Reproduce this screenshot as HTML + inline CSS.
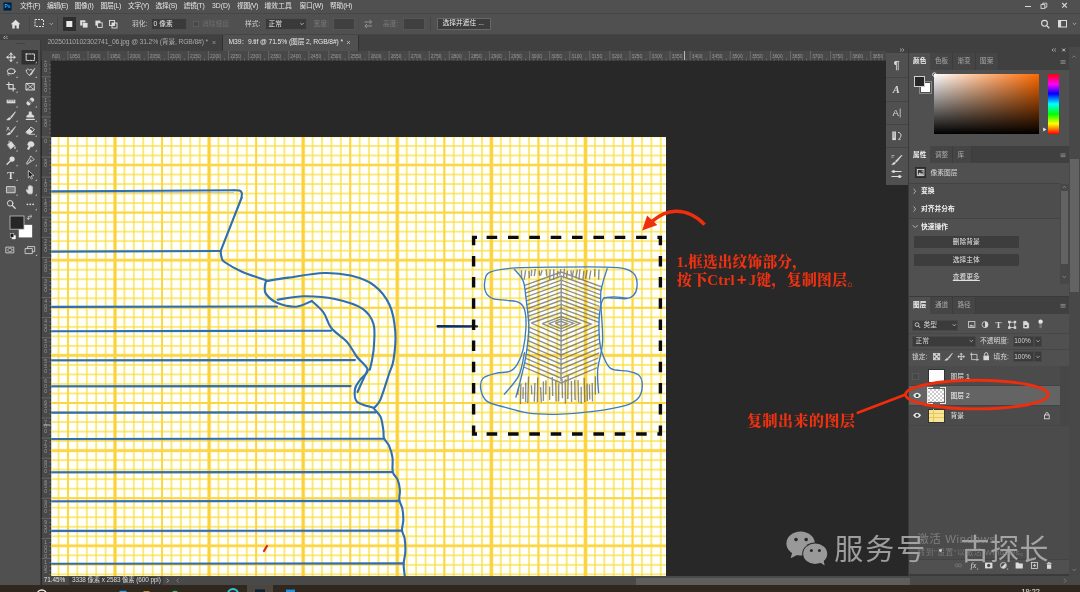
<!DOCTYPE html>
<html>
<head>
<meta charset="utf-8">
<title>Photoshop</title>
<style>
*{box-sizing:border-box;margin:0;padding:0}
html,body{width:1080px;height:592px;overflow:hidden;background:#282828}
body{position:relative;font-family:"Liberation Sans","Noto Sans CJK SC",sans-serif;color:#d6d6d6;font-size:6.75px;line-height:1}
.a{position:absolute}
.t{position:absolute;white-space:nowrap;line-height:1;opacity:.999}
svg{position:absolute;left:0;top:0;overflow:visible;opacity:.999}
.red{font-family:"Liberation Serif","Noto Serif CJK SC",serif;font-weight:900;color:#ee3110}
</style>
</head>
<body>
<svg width="1080" height="592" viewBox="0 0 1080 592">
<defs>
<clipPath id="pc"><rect x="51.2" y="137" width="614.8" height="439"/></clipPath>
<pattern id="gmin" x="20.900" y="69.800" width="9.4100" height="9.5200" patternUnits="userSpaceOnUse"><rect x="-0.650" y="0" width="1.300" height="9.5200" fill="#f8dc38" opacity="0.95"/><rect x="8.760" y="0" width="1.300" height="9.5200" fill="#f8dc38" opacity="0.95"/><rect x="0" y="-0.650" width="9.4100" height="1.300" fill="#f8dc38" opacity="0.95"/><rect x="0" y="8.870" width="9.4100" height="1.300" fill="#f8dc38" opacity="0.95"/></pattern>
<pattern id="gmed" x="20.900" y="69.800" width="47.0500" height="47.6000" patternUnits="userSpaceOnUse"><rect x="-0.950" y="0" width="1.900" height="47.6000" fill="#fbd644" opacity="1"/><rect x="46.100" y="0" width="1.900" height="47.6000" fill="#fbd644" opacity="1"/><rect x="0" y="-0.950" width="47.0500" height="1.900" fill="#fbd644" opacity="1"/><rect x="0" y="46.650" width="47.0500" height="1.900" fill="#fbd644" opacity="1"/></pattern>
<pattern id="gmaj" x="20.900" y="69.800" width="94.1000" height="95.2000" patternUnits="userSpaceOnUse"><rect x="-1.600" y="0" width="3.200" height="95.2000" fill="#fbd23a" opacity="1"/><rect x="92.500" y="0" width="3.200" height="95.2000" fill="#fbd23a" opacity="1"/><rect x="0" y="-1.300" width="94.1000" height="2.600" fill="#fbd648" opacity="1"/><rect x="0" y="93.900" width="94.1000" height="2.600" fill="#fbd648" opacity="1"/></pattern>
<filter id="soft" x="-5%" y="-5%" width="110%" height="110%"><feGaussianBlur stdDeviation="0.78"/></filter>
<filter id="soft2" x="-5%" y="-5%" width="110%" height="110%"><feGaussianBlur stdDeviation="0.55"/></filter>
<filter id="soft3" x="-5%" y="-5%" width="110%" height="110%"><feGaussianBlur stdDeviation="0.35"/></filter>
</defs>
<rect x="51.2" y="137" width="614.8" height="439" fill="#fffffb"/>
<g clip-path="url(#pc)">
<g filter="url(#soft)">
<rect x="49.2" y="135" width="618.8" height="443" fill="url(#gmin)"/>
<rect x="49.2" y="135" width="618.8" height="443" fill="url(#gmed)"/>
</g>
<g filter="url(#soft2)">
<rect x="49.2" y="135" width="618.8" height="443" fill="url(#gmaj)"/>
</g>
<g fill="none" stroke="#2f6fb0" stroke-width="2.1" stroke-linecap="round" stroke-linejoin="round">
<path d="M51.0 191.4L120.0 191.0L234.0 190.2"/>
<path d="M234.0 190.2C234.9 190.3 238.2 190.1 239.5 190.6C240.8 191.1 241.5 191.8 241.8 193.0C242.1 194.2 241.6 197.2 241.5 198.0"/>
<path d="M241.5 198.0L220.6 251.2"/>
<path d="M51.0 251.6L220.6 251.0"/>
<path d="M220.6 251.2C220.8 252.2 220.8 255.2 221.5 257.0C222.2 258.8 221.1 259.6 224.5 262.0C227.9 264.4 234.9 268.6 242.0 271.7C249.1 274.8 263.0 279.2 267.2 280.7"/>
<path d="M267.0 281.0C270.6 280.4 279.1 278.9 288.5 277.6C297.9 276.3 313.1 273.3 323.5 273.0C333.9 272.7 342.3 273.6 350.7 275.6C359.1 277.7 367.5 280.4 374.0 285.3C380.5 290.2 385.9 297.0 389.5 304.8C393.1 312.6 394.6 322.8 395.3 332.0C396.0 341.2 394.6 353.0 393.5 360.0C392.4 367.0 391.2 367.4 389.0 374.0C386.8 380.6 382.9 393.9 380.4 399.6C377.9 405.3 375.1 406.6 374.0 408.0"/>
<path d="M266.0 281.0C265.8 282.0 264.8 284.8 264.8 287.0C264.8 289.2 264.0 291.4 266.0 294.0C268.0 296.6 272.0 300.7 277.0 302.8C282.0 304.9 290.2 307.0 296.0 306.7C301.8 306.4 309.2 301.9 311.8 301.0"/>
<path d="M277.7 299.7C282.1 299.1 294.4 296.3 304.0 296.2C313.6 296.1 325.3 296.9 335.0 299.0C344.7 301.1 355.9 304.4 362.3 308.6C368.7 312.8 371.6 317.9 373.5 324.0C375.4 330.1 374.2 339.0 374.0 345.0C373.8 351.0 372.7 355.9 372.0 360.0C371.3 364.1 370.2 368.2 369.8 369.8"/>
<path d="M311.8 301.0C313.8 302.9 320.2 308.0 323.5 312.5C326.8 317.0 327.4 323.1 331.3 328.0C335.2 332.9 342.5 336.9 346.8 341.7C351.1 346.5 353.5 352.3 357.0 357.0C360.5 361.7 367.2 366.0 367.7 369.8C368.2 373.6 362.1 376.8 360.0 380.0C357.9 383.2 355.5 385.4 355.0 389.0C354.5 392.6 353.8 398.5 357.0 401.7C360.2 404.9 371.2 406.9 374.0 408.0"/>
<path d="M367.7 369.8C366.8 371.8 363.7 378.3 362.0 382.0C360.3 385.7 358.2 390.3 357.5 392.0"/>
<path d="M51.0 306.9L277.0 306.5"/>
<path d="M51.0 331.2L331.0 330.8"/>
<path d="M51.0 360.3L355.0 360.0"/>
<path d="M51.0 386.3L350.6 386.0"/>
<path d="M51.0 412.6L376.0 412.3"/>
<path d="M51.0 439.0L384.0 438.7"/>
<path d="M51.0 472.3L392.8 472.0"/>
<path d="M51.0 501.2L399.3 500.9"/>
<path d="M51.0 530.9L402.0 530.6"/>
<path d="M51.0 563.7L403.6 563.4"/>
<path d="M373.9 408.7C375.0 410.1 379.1 413.5 380.7 417.2C382.3 420.9 382.8 427.2 383.4 430.7C383.9 434.2 383.1 435.6 384.0 438.1C384.9 440.6 387.7 442.6 389.1 445.9C390.5 449.2 391.9 453.4 392.5 457.7C393.1 462.0 391.9 468.2 392.8 471.9C393.7 475.6 396.4 476.7 397.6 479.7C398.8 482.7 399.6 486.4 399.9 489.8C400.2 493.2 398.9 496.8 399.3 499.9C399.7 503.0 401.6 505.0 402.3 508.4C403.0 511.8 403.4 516.6 403.3 520.2C403.2 523.9 401.8 527.2 402.0 530.3C402.2 533.4 404.1 535.1 404.7 538.8C405.2 542.5 405.5 548.1 405.3 552.3C405.1 556.5 403.7 559.8 403.6 564.1C403.6 568.4 404.8 575.7 405.0 578.0"/>
</g>
<g fill="none" stroke="#6b7280" stroke-width="1" opacity=".35">
<path d="M51 192.6L234.0 192.6"/>
<path d="M51 361.2L355.0 361.2"/>
<path d="M51 387.2L350.6 387.2"/>
<path d="M51 413.5L376.0 413.5"/>
<path d="M51 439.9L384.7 439.9"/>
<path d="M51 473.2L393.0 473.2"/>
<path d="M51 502.1L399.6 502.1"/>
<path d="M51 531.8L403.8 531.8"/>
<path d="M51 564.6L405.0 564.6"/>
</g>
<path d="M264 551L267 546" stroke="#d8242a" stroke-width="2.2" stroke-linecap="round"/>
<path d="M437.6 326.2L477 326.4" stroke="#1d2a44" stroke-width="2.2" stroke-linecap="round"/>
<path d="M437.6 327.6L470 327.4" stroke="#3a78b8" stroke-width="1" stroke-linecap="round"/>
<clipPath id="oc"><path d="M514.5 268.0C528.4 265.8 591.8 265.5 606.5 268.0C621.2 270.5 603.5 277.8 602.5 283.0C601.5 288.2 600.8 292.8 600.2 299.0C599.6 305.2 599.0 312.3 599.0 320.0C599.0 327.7 600.3 336.7 600.0 345.0C599.7 353.3 597.3 360.2 597.0 370.0C596.7 379.8 611.3 398.3 598.0 404.0C584.7 409.7 529.8 407.7 517.0 404.0C504.2 400.3 519.5 390.2 521.0 382.0C522.5 373.8 524.8 364.2 526.0 355.0C527.2 345.8 528.0 336.5 528.0 327.0C528.0 317.5 526.8 305.7 526.0 298.0C525.2 290.3 524.9 286.0 523.0 281.0C521.1 276.0 500.6 270.2 514.5 268.0Z"/></clipPath>
<g clip-path="url(#oc)" fill="none" stroke="#50545c" stroke-width="1.35" opacity=".66" filter="url(#soft3)">
<path d="M521.5 270.2L521.6 278.7"/>
<path d="M525.6 270.4L524.1 279.6"/>
<path d="M529.0 270.9L529.3 278.2"/>
<path d="M531.7 269.8L531.3 276.2"/>
<path d="M535.3 268.8L534.3 276.1"/>
<path d="M539.3 270.5L539.5 275.8"/>
<path d="M542.1 270.2L540.5 275.6"/>
<path d="M546.1 269.3L546.7 276.1"/>
<path d="M550.1 269.4L549.7 279.8"/>
<path d="M553.8 269.3L553.7 279.7"/>
<path d="M558.0 270.8L557.2 276.5"/>
<path d="M560.8 269.1L559.9 275.3"/>
<path d="M564.4 268.8L563.5 278.4"/>
<path d="M567.5 270.6L566.6 277.4"/>
<path d="M570.9 270.4L571.4 275.3"/>
<path d="M573.5 270.4L571.9 279.2"/>
<path d="M577.4 269.6L575.8 277.9"/>
<path d="M580.0 269.2L578.9 279.8"/>
<path d="M583.8 270.8L583.0 279.7"/>
<path d="M587.0 270.0L585.6 278.9"/>
<path d="M590.8 270.6L589.3 279.3"/>
<path d="M594.9 269.0L594.7 276.7"/>
<path d="M599.0 269.5L598.6 279.6"/>
<path d="M518.5 379.5L517.8 395.0"/>
<path d="M520.9 383.6L520.4 404.0"/>
<path d="M523.2 386.9L523.0 398.9"/>
<path d="M525.7 382.5L525.6 402.1"/>
<path d="M528.5 376.6L527.8 403.1"/>
<path d="M531.4 385.2L531.8 394.4"/>
<path d="M534.9 382.9L534.3 401.7"/>
<path d="M537.7 377.6L537.4 402.3"/>
<path d="M540.6 387.0L541.3 402.4"/>
<path d="M543.4 381.4L543.4 401.0"/>
<path d="M546.0 380.4L545.8 394.6"/>
<path d="M549.6 386.6L549.6 399.9"/>
<path d="M552.3 377.0L552.7 396.0"/>
<path d="M555.7 380.0L556.1 401.6"/>
<path d="M558.8 383.3L558.6 401.4"/>
<path d="M562.0 379.1L562.5 398.3"/>
<path d="M565.2 379.2L565.4 403.4"/>
<path d="M568.2 376.1L567.8 399.0"/>
<path d="M571.4 381.1L571.6 402.0"/>
<path d="M574.7 379.8L575.1 400.1"/>
<path d="M578.0 379.9L578.6 402.3"/>
<path d="M581.2 386.7L581.2 403.5"/>
<path d="M584.1 377.8L584.8 402.2"/>
<path d="M587.0 383.6L587.4 400.9"/>
<path d="M589.4 384.6L589.7 399.4"/>
<path d="M592.2 382.9L592.5 401.5"/>
<path d="M595.4 376.3L595.3 394.8"/>
<path d="M561.2 277.0L561.0 381.0"/>
<path d="M555.2 323.2L561.2 321.3L567.2 323.8L561.2 326.0L555.2 323.2"/>
<path d="M548.7 323.7L561.2 318.9L573.7 323.3L561.2 328.8L548.7 323.7"/>
<path d="M542.2 323.6L561.2 316.5L580.2 323.4L561.2 331.6L542.2 323.6"/>
<path d="M531.2 323.0L561.2 312.5L591.2 324.0L561.2 336.2L531.2 323.0"/>
<path d="M520.2 323.5L561.2 308.4L602.2 323.5L561.2 340.9L520.2 323.5"/>
<path d="M509.2 323.2L561.2 304.4L613.2 323.8L561.2 345.5L509.2 323.2"/>
<path d="M498.2 323.1L561.2 300.3L624.2 323.9L561.2 350.2L498.2 323.1"/>
<path d="M487.2 323.1L561.2 296.3L635.2 323.9L561.2 354.9L487.2 323.1"/>
<path d="M476.2 323.3L561.2 292.2L646.2 323.7L561.2 359.5L476.2 323.3"/>
<path d="M465.2 323.2L561.2 288.2L657.2 323.8L561.2 364.2L465.2 323.2"/>
<path d="M454.2 323.2L561.2 284.1L668.2 323.8L561.2 368.9L454.2 323.2"/>
<path d="M443.2 323.0L561.2 280.1L679.2 324.0L561.2 373.5L443.2 323.0"/>
<path d="M432.2 323.5L561.2 276.0L690.2 323.5L561.2 378.2L432.2 323.5"/>
<path d="M421.2 323.4L561.2 272.0L701.2 323.6L561.2 382.9L421.2 323.4"/>
</g>
<g fill="none" stroke="#3b7cc4" stroke-width="1.35" stroke-linecap="round">
<path d="M490.1 272.2C495.3 270.1 504.0 268.8 515.9 267.9C527.9 267.1 547.0 267.2 561.8 267.1C576.7 266.9 594.4 266.8 604.9 267.1C615.4 267.3 620.0 267.4 625.0 268.8C630.0 270.1 633.0 272.1 635.0 275.1C637.0 278.1 637.3 283.2 637.0 286.6C636.8 289.9 635.4 293.2 633.6 295.2C631.8 297.2 629.8 298.1 626.4 298.6C623.1 299.1 617.3 298.1 613.5 298.1C609.7 298.1 605.8 296.2 603.5 298.6C601.2 301.0 600.5 306.3 599.7 312.4C599.0 318.5 598.8 328.7 599.2 335.4C599.5 342.1 600.1 347.1 602.0 352.6C603.9 358.1 606.3 365.3 610.6 368.4C614.9 371.5 623.1 370.0 627.9 371.2C632.6 372.4 637.0 372.9 639.3 375.6C641.7 378.2 642.5 383.2 642.2 387.0C642.0 390.9 640.8 395.4 637.9 398.5C635.0 401.6 632.4 403.5 625.0 405.7C617.6 407.8 604.9 410.0 593.4 411.4C581.9 412.9 567.1 414.1 556.1 414.3C545.1 414.5 536.0 414.1 527.4 412.9C518.8 411.7 511.1 409.0 504.4 407.1C497.7 405.2 491.1 404.3 487.2 401.4C483.3 398.5 481.6 393.7 480.9 389.9C480.2 386.1 480.4 381.2 482.9 378.4C485.4 375.6 491.3 374.5 495.8 373.3C500.4 372.1 506.6 372.8 510.2 371.2C513.8 369.7 515.2 367.7 517.4 364.1C519.5 360.5 521.7 355.9 523.1 349.7C524.5 343.5 525.7 333.5 526.0 326.8C526.2 320.1 525.7 313.6 524.5 309.5C523.3 305.5 521.7 303.9 518.8 302.4C515.9 300.8 511.6 301.0 507.3 300.4C503.0 299.7 496.5 300.0 493.0 298.6C489.4 297.3 487.1 295.3 485.8 292.3C484.4 289.3 484.2 284.2 484.9 280.8C485.6 277.5 484.9 274.4 490.1 272.2Z"/>
<path d="M514.5 269.4C515.9 271.3 521.2 276.0 523.1 280.8C525.0 285.6 525.0 290.4 526.0 298.1C526.9 305.7 528.8 317.2 528.8 326.8C528.8 336.3 527.4 346.4 526.0 355.5C524.5 364.5 521.9 374.4 520.2 381.3C518.6 388.2 516.6 394.4 515.9 397.1"/>
<path d="M607.2 268.8C606.4 271.3 603.7 278.8 602.6 283.7C601.5 288.6 600.6 288.5 600.6 298.1C600.6 307.6 603.1 329.1 602.6 341.1C602.1 353.1 598.4 361.2 597.7 369.8C597.1 378.4 598.4 388.9 598.6 392.8"/>
<path d="M524.5 352.6C523.6 356.4 522.1 368.6 518.8 375.6C515.4 382.5 506.8 391.1 504.4 394.2"/>
<path d="M603.5 298.1C605.1 297.9 609.5 296.9 613.5 296.9C617.5 296.9 625.0 297.9 627.3 298.1"/>
</g>
</g>
</svg>
<div class="a" style="left:0px;top:0px;width:1080px;height:14px;background:#505050;border-bottom:1px solid #464646"></div>
<div class="a" style="left:3px;top:2.2px;width:9.2px;height:8.8px;background:#001e36;border-radius:1.5px;border:.5px solid #0b3a63"></div>
<div class="t " style="left:4.5px;top:4px;font-size:5px;color:#31a8ff;font-weight:bold;letter-spacing:-.2px">Ps</div>
<div class="t " style="left:20px;top:3.2px;font-size:6.8px;color:#e6e6e6;letter-spacing:-0.456px;">文件(F)</div>
<div class="t " style="left:47px;top:3.2px;font-size:6.8px;color:#e6e6e6;letter-spacing:-0.331px;">编辑(E)</div>
<div class="t " style="left:74.5px;top:3.2px;font-size:6.8px;color:#e6e6e6;letter-spacing:-0.203px;">图像(I)</div>
<div class="t " style="left:100.5px;top:3.2px;font-size:6.8px;color:#e6e6e6;letter-spacing:-0.281px;">图层(L)</div>
<div class="t " style="left:128px;top:3.2px;font-size:6.8px;color:#e6e6e6;letter-spacing:-0.331px;">文字(Y)</div>
<div class="t " style="left:155.5px;top:3.2px;font-size:6.8px;color:#e6e6e6;letter-spacing:-0.231px;">选择(S)</div>
<div class="t " style="left:183.5px;top:3.2px;font-size:6.8px;color:#e6e6e6;letter-spacing:-0.256px;">滤镜(T)</div>
<div class="t " style="left:212px;top:3.2px;font-size:6.8px;color:#e6e6e6;letter-spacing:-0.025px;">3D(D)</div>
<div class="t " style="left:237px;top:3.2px;font-size:6.8px;color:#e6e6e6;letter-spacing:-0.331px;">视图(V)</div>
<div class="t " style="left:264.5px;top:3.2px;font-size:6.8px;color:#e6e6e6;letter-spacing:0.078px;">增效工具</div>
<div class="t " style="left:299.5px;top:3.2px;font-size:6.8px;color:#e6e6e6;letter-spacing:-0.209px;">窗口(W)</div>
<div class="t " style="left:330px;top:3.2px;font-size:6.8px;color:#e6e6e6;letter-spacing:-0.206px;">帮助(H)</div>
<div class="a" style="left:1025px;top:6.2px;width:5.6px;height:1.2px;background:#d8d8d8;"></div>
<svg width="1080" height="592"><g fill="none" stroke="#d8d8d8" stroke-width=".9"><rect x="1041" y="4.6" width="3.8" height="3.8"/><path d="M1042.6 4.6V3.2H1046.8V7.2H1044.8"/><path d="M1062.2 3L1066.8 7.6M1066.8 3L1062.2 7.6" stroke-width="1.1"/></g></svg>
<div class="a" style="left:0px;top:14px;width:1080px;height:20.5px;background:#505050;border-bottom:1px solid #454545"></div>
<svg width="1080" height="592">
<path d="M15.6 19.8L10.8 24.2H12.3V28.5H14.7V25.6H16.5V28.5H18.9V24.2H20.4Z" fill="#e2e2e2"/>
<path d="M29.5 17V31M57.5 17V31M430.5 17V31" stroke="#464646" stroke-width="1"/>
<rect x="35" y="19.5" width="8.5" height="7" fill="none" stroke="#dedede" stroke-width="1" stroke-dasharray="2 1"/>
<path d="M49.5 23L51.2 24.7L52.9 23" fill="none" stroke="#bdbdbd" stroke-width=".8"/>
<rect x="63" y="17" width="13" height="14" fill="#2e2e2e"/>
<rect x="66.3" y="21" width="6" height="6" fill="#e8e8e8"/>
<rect x="80.2" y="20.3" width="5.2" height="5.2" fill="#e0e0e0"/><rect x="82.7" y="22.7" width="5.2" height="5.2" fill="#e0e0e0" stroke="#4d4d4d" stroke-width=".5"/>
<rect x="95.4" y="20.6" width="5" height="5" fill="#e0e0e0"/><rect x="97.6" y="22.8" width="4.6" height="4.6" fill="#4d4d4d" stroke="#e0e0e0" stroke-width=".9"/>
<rect x="109.5" y="20.5" width="5" height="5" fill="none" stroke="#e0e0e0" stroke-width=".9"/><rect x="112" y="23" width="5" height="5" fill="none" stroke="#e0e0e0" stroke-width=".9"/><rect x="112" y="23" width="2.5" height="2.5" fill="#e0e0e0"/>
<path d="M364.5 22.5H371.5M369.5 20.5L371.7 22.5L369.5 24.5M372 26.5H365M367 24.5L364.8 26.5L367 28.5" fill="none" stroke="#9a9a9a" stroke-width=".9" transform="translate(0,-0.5)"/>
<circle cx="1044.5" cy="23.3" r="2.9" fill="none" stroke="#dcdcdc" stroke-width="1.1"/><path d="M1046.7 25.6L1049.3 28.2" stroke="#dcdcdc" stroke-width="1.3"/>
<rect x="1058.5" y="20.5" width="8" height="6.5" fill="none" stroke="#dcdcdc" stroke-width="1"/><rect x="1058.5" y="20.5" width="2.6" height="6.5" fill="#dcdcdc"/><path d="M1072.8 23L1074.5 24.7L1076.2 23" fill="none" stroke="#bdbdbd" stroke-width=".8"/>
</svg>
<div class="t " style="left:132px;top:20.5px;font-size:6.75px;color:#d2d2d2;">羽化:</div>
<div class="a" style="left:150.5px;top:18px;width:36px;height:12px;background:#3a3a3a;border:.5px solid #4e4e4e"></div>
<div class="t " style="left:153.5px;top:20.5px;font-size:6.75px;color:#e4e4e4;">0 像素</div>
<div class="a" style="left:193px;top:21px;width:6px;height:6px;background:#474747;border:.5px solid #5c5c5c"></div>
<div class="t " style="left:202px;top:20.5px;font-size:6.75px;color:#6e6e6e;">消除锯齿</div>
<div class="t " style="left:245px;top:20.5px;font-size:6.75px;color:#d2d2d2;">样式:</div>
<div class="a" style="left:264.5px;top:18px;width:42.5px;height:12px;background:#3a3a3a;border:.5px solid #4e4e4e"></div>
<div class="t " style="left:268.5px;top:20.5px;font-size:6.75px;color:#e4e4e4;">正常</div>
<svg width="1080" height="592"><path d="M300.3 23L302 24.7L303.7 23" fill="none" stroke="#cfcfcf" stroke-width=".8"/></svg>
<div class="t " style="left:313.5px;top:20.5px;font-size:6.75px;color:#7a7a7a;">宽度:</div>
<div class="a" style="left:333px;top:18px;width:22px;height:12px;background:#404040;border:.5px solid #555"></div>
<div class="t " style="left:383px;top:20.5px;font-size:6.75px;color:#7a7a7a;">高度:</div>
<div class="a" style="left:402.5px;top:18px;width:22px;height:12px;background:#404040;border:.5px solid #555"></div>
<div class="a" style="left:437px;top:17.5px;width:53.5px;height:12px;background:#3c3c3c;border:.5px solid #686868;border-radius:1px"></div>
<div class="t " style="left:442.5px;top:20.3px;font-size:6.75px;color:#ececec;">选择并遮住 ...</div>
<div class="a" style="left:0px;top:34.5px;width:1080px;height:16.5px;background:#404040;"></div>
<div class="a" style="left:222.5px;top:34.5px;width:135px;height:16.5px;background:#505050;"></div>
<div class="a" style="left:221.5px;top:34.5px;width:1px;height:16.5px;background:#303030;"></div>
<div class="a" style="left:357.5px;top:34.5px;width:1px;height:16.5px;background:#303030;"></div>
<div class="t " style="left:47.5px;top:39.3px;font-size:6.75px;color:#a9a9a9;letter-spacing:-0.146px;">20250110102302741_06.jpg @ 31.2% (背景, RGB/8#) *</div>
<div class="t " style="left:228.5px;top:39.3px;font-size:6.75px;color:#e8e8e8;letter-spacing:-0.111px;">M39：9.tif @ 71.5% (图层 2, RGB/8#) *</div>
<svg width="1080" height="592"><path d="M212.5 41L215.5 44M215.5 41L212.5 44" stroke="#a0a0a0" stroke-width=".7"/><path d="M347 41L350 44M350 41L347 44" stroke="#d0d0d0" stroke-width=".7"/></svg>
<div class="a" style="left:41.5px;top:51px;width:845px;height:9.5px;background:#484848;border-bottom:.5px solid #3a3a3a"></div>
<div class="a" style="left:41.5px;top:51px;width:9.7px;height:525px;background:#484848;border-right:.5px solid #3a3a3a"></div>
<svg width="1080" height="592"><g stroke="#7c7c7c" stroke-width=".6">
<path d="M55.94 58.3V60.5"/>
<path d="M59.95 58.3V60.5"/>
<path d="M63.97 58.3V60.5"/>
<path d="M67.98 51V60.5"/>
<path d="M71.99 58.3V60.5"/>
<path d="M76.01 58.3V60.5"/>
<path d="M80.02 58.3V60.5"/>
<path d="M84.04 58.3V60.5"/>
<path d="M88.05 51V60.5"/>
<path d="M92.06 58.3V60.5"/>
<path d="M96.08 58.3V60.5"/>
<path d="M100.09 58.3V60.5"/>
<path d="M104.11 58.3V60.5"/>
<path d="M108.12 51V60.5"/>
<path d="M112.13 58.3V60.5"/>
<path d="M116.15 58.3V60.5"/>
<path d="M120.16 58.3V60.5"/>
<path d="M124.18 58.3V60.5"/>
<path d="M128.19 51V60.5"/>
<path d="M132.20 58.3V60.5"/>
<path d="M136.22 58.3V60.5"/>
<path d="M140.23 58.3V60.5"/>
<path d="M144.25 58.3V60.5"/>
<path d="M148.26 51V60.5"/>
<path d="M152.27 58.3V60.5"/>
<path d="M156.29 58.3V60.5"/>
<path d="M160.30 58.3V60.5"/>
<path d="M164.32 58.3V60.5"/>
<path d="M168.33 51V60.5"/>
<path d="M172.34 58.3V60.5"/>
<path d="M176.36 58.3V60.5"/>
<path d="M180.37 58.3V60.5"/>
<path d="M184.39 58.3V60.5"/>
<path d="M188.40 51V60.5"/>
<path d="M192.41 58.3V60.5"/>
<path d="M196.43 58.3V60.5"/>
<path d="M200.44 58.3V60.5"/>
<path d="M204.46 58.3V60.5"/>
<path d="M208.47 51V60.5"/>
<path d="M212.48 58.3V60.5"/>
<path d="M216.50 58.3V60.5"/>
<path d="M220.51 58.3V60.5"/>
<path d="M224.53 58.3V60.5"/>
<path d="M228.54 51V60.5"/>
<path d="M232.55 58.3V60.5"/>
<path d="M236.57 58.3V60.5"/>
<path d="M240.58 58.3V60.5"/>
<path d="M244.60 58.3V60.5"/>
<path d="M248.61 51V60.5"/>
<path d="M252.62 58.3V60.5"/>
<path d="M256.64 58.3V60.5"/>
<path d="M260.65 58.3V60.5"/>
<path d="M264.67 58.3V60.5"/>
<path d="M268.68 51V60.5"/>
<path d="M272.69 58.3V60.5"/>
<path d="M276.71 58.3V60.5"/>
<path d="M280.72 58.3V60.5"/>
<path d="M284.74 58.3V60.5"/>
<path d="M288.75 51V60.5"/>
<path d="M292.76 58.3V60.5"/>
<path d="M296.78 58.3V60.5"/>
<path d="M300.79 58.3V60.5"/>
<path d="M304.81 58.3V60.5"/>
<path d="M308.82 51V60.5"/>
<path d="M312.83 58.3V60.5"/>
<path d="M316.85 58.3V60.5"/>
<path d="M320.86 58.3V60.5"/>
<path d="M324.88 58.3V60.5"/>
<path d="M328.89 51V60.5"/>
<path d="M332.90 58.3V60.5"/>
<path d="M336.92 58.3V60.5"/>
<path d="M340.93 58.3V60.5"/>
<path d="M344.95 58.3V60.5"/>
<path d="M348.96 51V60.5"/>
<path d="M352.97 58.3V60.5"/>
<path d="M356.99 58.3V60.5"/>
<path d="M361.00 58.3V60.5"/>
<path d="M365.02 58.3V60.5"/>
<path d="M369.03 51V60.5"/>
<path d="M373.04 58.3V60.5"/>
<path d="M377.06 58.3V60.5"/>
<path d="M381.07 58.3V60.5"/>
<path d="M385.09 58.3V60.5"/>
<path d="M389.10 51V60.5"/>
<path d="M393.11 58.3V60.5"/>
<path d="M397.13 58.3V60.5"/>
<path d="M401.14 58.3V60.5"/>
<path d="M405.16 58.3V60.5"/>
<path d="M409.17 51V60.5"/>
<path d="M413.18 58.3V60.5"/>
<path d="M417.20 58.3V60.5"/>
<path d="M421.21 58.3V60.5"/>
<path d="M425.23 58.3V60.5"/>
<path d="M429.24 51V60.5"/>
<path d="M433.25 58.3V60.5"/>
<path d="M437.27 58.3V60.5"/>
<path d="M441.28 58.3V60.5"/>
<path d="M445.30 58.3V60.5"/>
<path d="M449.31 51V60.5"/>
<path d="M453.32 58.3V60.5"/>
<path d="M457.34 58.3V60.5"/>
<path d="M461.35 58.3V60.5"/>
<path d="M465.37 58.3V60.5"/>
<path d="M469.38 51V60.5"/>
<path d="M473.39 58.3V60.5"/>
<path d="M477.41 58.3V60.5"/>
<path d="M481.42 58.3V60.5"/>
<path d="M485.44 58.3V60.5"/>
<path d="M489.45 51V60.5"/>
<path d="M493.46 58.3V60.5"/>
<path d="M497.48 58.3V60.5"/>
<path d="M501.49 58.3V60.5"/>
<path d="M505.51 58.3V60.5"/>
<path d="M509.52 51V60.5"/>
<path d="M513.53 58.3V60.5"/>
<path d="M517.55 58.3V60.5"/>
<path d="M521.56 58.3V60.5"/>
<path d="M525.58 58.3V60.5"/>
<path d="M529.59 51V60.5"/>
<path d="M533.60 58.3V60.5"/>
<path d="M537.62 58.3V60.5"/>
<path d="M541.63 58.3V60.5"/>
<path d="M545.65 58.3V60.5"/>
<path d="M549.66 51V60.5"/>
<path d="M553.67 58.3V60.5"/>
<path d="M557.69 58.3V60.5"/>
<path d="M561.70 58.3V60.5"/>
<path d="M565.72 58.3V60.5"/>
<path d="M569.73 51V60.5"/>
<path d="M573.74 58.3V60.5"/>
<path d="M577.76 58.3V60.5"/>
<path d="M581.77 58.3V60.5"/>
<path d="M585.79 58.3V60.5"/>
<path d="M589.80 51V60.5"/>
<path d="M593.81 58.3V60.5"/>
<path d="M597.83 58.3V60.5"/>
<path d="M601.84 58.3V60.5"/>
<path d="M605.86 58.3V60.5"/>
<path d="M609.87 51V60.5"/>
<path d="M613.88 58.3V60.5"/>
<path d="M617.90 58.3V60.5"/>
<path d="M621.91 58.3V60.5"/>
<path d="M625.93 58.3V60.5"/>
<path d="M629.94 51V60.5"/>
<path d="M633.95 58.3V60.5"/>
<path d="M637.97 58.3V60.5"/>
<path d="M641.98 58.3V60.5"/>
<path d="M646.00 58.3V60.5"/>
<path d="M650.01 51V60.5"/>
<path d="M654.02 58.3V60.5"/>
<path d="M658.04 58.3V60.5"/>
<path d="M662.05 58.3V60.5"/>
<path d="M666.07 58.3V60.5"/>
<path d="M670.08 51V60.5"/>
<path d="M674.09 58.3V60.5"/>
<path d="M678.11 58.3V60.5"/>
<path d="M682.12 58.3V60.5"/>
<path d="M686.14 58.3V60.5"/>
<path d="M690.15 51V60.5"/>
<path d="M694.16 58.3V60.5"/>
<path d="M698.18 58.3V60.5"/>
<path d="M702.19 58.3V60.5"/>
<path d="M706.21 58.3V60.5"/>
<path d="M710.22 51V60.5"/>
<path d="M714.23 58.3V60.5"/>
<path d="M718.25 58.3V60.5"/>
<path d="M722.26 58.3V60.5"/>
<path d="M726.28 58.3V60.5"/>
<path d="M730.29 51V60.5"/>
<path d="M734.30 58.3V60.5"/>
<path d="M738.32 58.3V60.5"/>
<path d="M742.33 58.3V60.5"/>
<path d="M746.35 58.3V60.5"/>
<path d="M750.36 51V60.5"/>
<path d="M754.37 58.3V60.5"/>
<path d="M758.39 58.3V60.5"/>
<path d="M762.40 58.3V60.5"/>
<path d="M766.42 58.3V60.5"/>
<path d="M770.43 51V60.5"/>
<path d="M774.44 58.3V60.5"/>
<path d="M778.46 58.3V60.5"/>
<path d="M782.47 58.3V60.5"/>
<path d="M786.49 58.3V60.5"/>
<path d="M790.50 51V60.5"/>
<path d="M794.51 58.3V60.5"/>
<path d="M798.53 58.3V60.5"/>
<path d="M802.54 58.3V60.5"/>
<path d="M806.56 58.3V60.5"/>
<path d="M810.57 51V60.5"/>
<path d="M814.58 58.3V60.5"/>
<path d="M818.60 58.3V60.5"/>
<path d="M822.61 58.3V60.5"/>
<path d="M826.63 58.3V60.5"/>
<path d="M830.64 51V60.5"/>
<path d="M834.65 58.3V60.5"/>
<path d="M838.67 58.3V60.5"/>
<path d="M842.68 58.3V60.5"/>
<path d="M846.70 58.3V60.5"/>
<path d="M850.71 51V60.5"/>
<path d="M854.72 58.3V60.5"/>
<path d="M858.74 58.3V60.5"/>
<path d="M862.75 58.3V60.5"/>
<path d="M866.77 58.3V60.5"/>
<path d="M870.78 51V60.5"/>
<path d="M874.79 58.3V60.5"/>
<path d="M878.81 58.3V60.5"/>
<path d="M882.82 58.3V60.5"/>
<path d="M49 64.75H51"/>
<path d="M49 68.76H51"/>
<path d="M49 72.78H51"/>
<path d="M41.5 76.79H51"/>
<path d="M49 80.80H51"/>
<path d="M49 84.82H51"/>
<path d="M49 88.83H51"/>
<path d="M49 92.85H51"/>
<path d="M41.5 96.86H51"/>
<path d="M49 100.87H51"/>
<path d="M49 104.89H51"/>
<path d="M49 108.90H51"/>
<path d="M49 112.92H51"/>
<path d="M41.5 116.93H51"/>
<path d="M49 120.94H51"/>
<path d="M49 124.96H51"/>
<path d="M49 128.97H51"/>
<path d="M49 132.99H51"/>
<path d="M41.5 137.00H51"/>
<path d="M49 141.01H51"/>
<path d="M49 145.03H51"/>
<path d="M49 149.04H51"/>
<path d="M49 153.06H51"/>
<path d="M41.5 157.07H51"/>
<path d="M49 161.08H51"/>
<path d="M49 165.10H51"/>
<path d="M49 169.11H51"/>
<path d="M49 173.13H51"/>
<path d="M41.5 177.14H51"/>
<path d="M49 181.15H51"/>
<path d="M49 185.17H51"/>
<path d="M49 189.18H51"/>
<path d="M49 193.20H51"/>
<path d="M41.5 197.21H51"/>
<path d="M49 201.22H51"/>
<path d="M49 205.24H51"/>
<path d="M49 209.25H51"/>
<path d="M49 213.27H51"/>
<path d="M41.5 217.28H51"/>
<path d="M49 221.29H51"/>
<path d="M49 225.31H51"/>
<path d="M49 229.32H51"/>
<path d="M49 233.34H51"/>
<path d="M41.5 237.35H51"/>
<path d="M49 241.36H51"/>
<path d="M49 245.38H51"/>
<path d="M49 249.39H51"/>
<path d="M49 253.41H51"/>
<path d="M41.5 257.42H51"/>
<path d="M49 261.43H51"/>
<path d="M49 265.45H51"/>
<path d="M49 269.46H51"/>
<path d="M49 273.48H51"/>
<path d="M41.5 277.49H51"/>
<path d="M49 281.50H51"/>
<path d="M49 285.52H51"/>
<path d="M49 289.53H51"/>
<path d="M49 293.55H51"/>
<path d="M41.5 297.56H51"/>
<path d="M49 301.57H51"/>
<path d="M49 305.59H51"/>
<path d="M49 309.60H51"/>
<path d="M49 313.62H51"/>
<path d="M41.5 317.63H51"/>
<path d="M49 321.64H51"/>
<path d="M49 325.66H51"/>
<path d="M49 329.67H51"/>
<path d="M49 333.69H51"/>
<path d="M41.5 337.70H51"/>
<path d="M49 341.71H51"/>
<path d="M49 345.73H51"/>
<path d="M49 349.74H51"/>
<path d="M49 353.76H51"/>
<path d="M41.5 357.77H51"/>
<path d="M49 361.78H51"/>
<path d="M49 365.80H51"/>
<path d="M49 369.81H51"/>
<path d="M49 373.83H51"/>
<path d="M41.5 377.84H51"/>
<path d="M49 381.85H51"/>
<path d="M49 385.87H51"/>
<path d="M49 389.88H51"/>
<path d="M49 393.90H51"/>
<path d="M41.5 397.91H51"/>
<path d="M49 401.92H51"/>
<path d="M49 405.94H51"/>
<path d="M49 409.95H51"/>
<path d="M49 413.97H51"/>
<path d="M41.5 417.98H51"/>
<path d="M49 421.99H51"/>
<path d="M49 426.01H51"/>
<path d="M49 430.02H51"/>
<path d="M49 434.04H51"/>
<path d="M41.5 438.05H51"/>
<path d="M49 442.06H51"/>
<path d="M49 446.08H51"/>
<path d="M49 450.09H51"/>
<path d="M49 454.11H51"/>
<path d="M41.5 458.12H51"/>
<path d="M49 462.13H51"/>
<path d="M49 466.15H51"/>
<path d="M49 470.16H51"/>
<path d="M49 474.18H51"/>
<path d="M41.5 478.19H51"/>
<path d="M49 482.20H51"/>
<path d="M49 486.22H51"/>
<path d="M49 490.23H51"/>
<path d="M49 494.25H51"/>
<path d="M41.5 498.26H51"/>
<path d="M49 502.27H51"/>
<path d="M49 506.29H51"/>
<path d="M49 510.30H51"/>
<path d="M49 514.32H51"/>
<path d="M41.5 518.33H51"/>
<path d="M49 522.34H51"/>
<path d="M49 526.36H51"/>
<path d="M49 530.37H51"/>
<path d="M49 534.39H51"/>
<path d="M41.5 538.40H51"/>
<path d="M49 542.41H51"/>
<path d="M49 546.43H51"/>
<path d="M49 550.44H51"/>
<path d="M49 554.46H51"/>
<path d="M41.5 558.47H51"/>
<path d="M49 562.48H51"/>
<path d="M49 566.50H51"/>
<path d="M49 570.51H51"/>
<path d="M49 574.53H51"/>
</g>
<g font-family="Liberation Sans, sans-serif" font-size="4.8" fill="#9c9c9c"><text x="52.00" y="57.6">800</text><text x="69.58" y="57.6">1850</text><text x="89.65" y="57.6">1900</text><text x="109.72" y="57.6">1950</text><text x="129.79" y="57.6">2000</text><text x="149.86" y="57.6">2050</text><text x="169.93" y="57.6">2100</text><text x="190.00" y="57.6">2150</text><text x="210.07" y="57.6">2200</text><text x="230.14" y="57.6">2250</text><text x="250.21" y="57.6">2300</text><text x="270.28" y="57.6">2350</text><text x="290.35" y="57.6">2400</text><text x="310.42" y="57.6">2450</text><text x="330.49" y="57.6">2500</text><text x="350.56" y="57.6">2550</text><text x="370.63" y="57.6">2600</text><text x="390.70" y="57.6">2650</text><text x="410.77" y="57.6">2700</text><text x="430.84" y="57.6">2750</text><text x="450.91" y="57.6">2800</text><text x="470.98" y="57.6">2850</text><text x="491.05" y="57.6">2900</text><text x="511.12" y="57.6">2950</text><text x="531.19" y="57.6">3000</text><text x="551.26" y="57.6">3050</text><text x="571.33" y="57.6">3100</text><text x="591.40" y="57.6">3150</text><text x="611.47" y="57.6">3200</text><text x="631.54" y="57.6">3250</text><text x="651.61" y="57.6">3300</text><text x="671.68" y="57.6">3350</text><text x="691.75" y="57.6">3400</text><text x="711.82" y="57.6">3450</text><text x="731.89" y="57.6">3500</text><text x="751.96" y="57.6">3550</text><text x="772.03" y="57.6">3600</text><text x="792.10" y="57.6">3650</text><text x="812.17" y="57.6">3700</text><text x="832.24" y="57.6">3750</text><text x="852.31" y="57.6">3800</text><text x="872.38" y="57.6">3850</text></g>
<g font-family="Liberation Sans, sans-serif" font-size="5" fill="#9c9c9c"><text x="44.2" y="62.32">2</text><text x="44.2" y="66.92">0</text><text x="44.2" y="71.52">0</text><text x="44.2" y="82.39">1</text><text x="44.2" y="86.99">5</text><text x="44.2" y="91.59">0</text><text x="44.2" y="102.46">1</text><text x="44.2" y="107.06">0</text><text x="44.2" y="111.66">0</text><text x="44.2" y="122.53">5</text><text x="44.2" y="127.13">0</text><text x="44.2" y="142.60">0</text><text x="44.2" y="162.67">5</text><text x="44.2" y="167.27">0</text><text x="44.2" y="182.74">1</text><text x="44.2" y="187.34">0</text><text x="44.2" y="191.94">0</text><text x="44.2" y="202.81">1</text><text x="44.2" y="207.41">5</text><text x="44.2" y="212.01">0</text><text x="44.2" y="222.88">2</text><text x="44.2" y="227.48">0</text><text x="44.2" y="232.08">0</text><text x="44.2" y="242.95">2</text><text x="44.2" y="247.55">5</text><text x="44.2" y="252.15">0</text><text x="44.2" y="263.02">3</text><text x="44.2" y="267.62">0</text><text x="44.2" y="272.22">0</text><text x="44.2" y="283.09">3</text><text x="44.2" y="287.69">5</text><text x="44.2" y="292.29">0</text><text x="44.2" y="303.16">4</text><text x="44.2" y="307.76">0</text><text x="44.2" y="312.36">0</text><text x="44.2" y="323.23">4</text><text x="44.2" y="327.83">5</text><text x="44.2" y="332.43">0</text><text x="44.2" y="343.30">5</text><text x="44.2" y="347.90">0</text><text x="44.2" y="352.50">0</text><text x="44.2" y="363.37">5</text><text x="44.2" y="367.97">5</text><text x="44.2" y="372.57">0</text><text x="44.2" y="383.44">6</text><text x="44.2" y="388.04">0</text><text x="44.2" y="392.64">0</text><text x="44.2" y="403.51">6</text><text x="44.2" y="408.11">5</text><text x="44.2" y="412.71">0</text><text x="44.2" y="423.58">7</text><text x="44.2" y="428.18">0</text><text x="44.2" y="432.78">0</text><text x="44.2" y="443.65">7</text><text x="44.2" y="448.25">5</text><text x="44.2" y="452.85">0</text><text x="44.2" y="463.72">8</text><text x="44.2" y="468.32">0</text><text x="44.2" y="472.92">0</text><text x="44.2" y="483.79">8</text><text x="44.2" y="488.39">5</text><text x="44.2" y="492.99">0</text><text x="44.2" y="503.86">9</text><text x="44.2" y="508.46">0</text><text x="44.2" y="513.06">0</text><text x="44.2" y="523.93">9</text><text x="44.2" y="528.53">5</text><text x="44.2" y="533.13">0</text><text x="44.2" y="544.00">1</text><text x="44.2" y="548.60">0</text><text x="44.2" y="553.20">0</text><text x="44.2" y="557.80">0</text><text x="44.2" y="564.07">1</text><text x="44.2" y="568.67">0</text><text x="44.2" y="573.27">5</text></g>
<path d="M684.5 51V60M43.5 425H50.5" stroke="#d8d8d8" stroke-width=".8"/>
<rect x="41.5" y="51" width="9.7" height="9.5" fill="#484848"/>
</svg>
<div class="a" style="left:0px;top:34.5px;width:41.5px;height:6px;background:#404040;"></div>
<div class="a" style="left:0px;top:40px;width:41px;height:546px;background:#505050;border-right:.5px solid #3a3a3a"></div>
<svg width="1080" height="592">
<path d="M5.2 35.8L3.6 37.4L5.2 39M7.6 35.8L6 37.4L7.6 39" fill="none" stroke="#c8c8c8" stroke-width=".8"/>
<path d="M16 43.5H25" stroke="#424242" stroke-width="1"/>
<rect x="21.5" y="50" width="16.5" height="14.5" fill="#303030"/>
<g transform="translate(11,57.2) scale(.9)" fill="none" stroke="#dcdcdc" stroke-width="1" stroke-linecap="round" stroke-linejoin="round"><path d="M0 -4.6V4.6M-4.6 0H4.6" stroke-width="1.2"/><path d="M-1.7 -3L0 -4.8L1.7 -3M-1.7 3L0 4.8L1.7 3M-3 -1.7L-4.8 0L-3 1.7M3 -1.7L4.8 0L3 1.7" fill="#dcdcdc" stroke-width=".8"/></g>
<g transform="translate(30.3,57.2) scale(.9)" fill="none" stroke="#dcdcdc" stroke-width="1" stroke-linecap="round" stroke-linejoin="round"><rect x="-4.6" y="-3.6" width="9.2" height="7.2" stroke-dasharray="2.1 1.1" stroke-width="1.1"/></g>
<g transform="translate(11,72) scale(.9)" fill="none" stroke="#dcdcdc" stroke-width="1" stroke-linecap="round" stroke-linejoin="round"><ellipse cx="0.3" cy="-0.8" rx="4.4" ry="2.9" stroke-width="1.1"/><path d="M-3 1.3C-4.2 2.2 -3.6 3.8 -2.2 3.6"/></g>
<g transform="translate(30.3,72) scale(.9)" fill="none" stroke="#dcdcdc" stroke-width="1" stroke-linecap="round" stroke-linejoin="round"><path d="M-4.5 -1.5C-4.5 -3.5 -1.5 -3.8 -0.8 -2C0.2 -3.6 2.5 -3 2.2 -1" stroke-dasharray="1.6 .9"/><path d="M-4.5 -1.5C-4 1.5 -2 3 -0.5 4" stroke-dasharray="1.6 .9"/><path d="M4.8 -4L0.3 1.6L-0.8 3.6L1.4 2.8L5 -3.6Z" fill="#dcdcdc" stroke-width=".5"/></g>
<g transform="translate(11,86.7) scale(.9)" fill="none" stroke="#dcdcdc" stroke-width="1" stroke-linecap="round" stroke-linejoin="round"><path d="M-2.4 -4.8V2.4H4.8M-4.8 -2.4H2.4V4.8" stroke-width="1.2"/></g>
<g transform="translate(30.3,86.7) scale(.9)" fill="none" stroke="#dcdcdc" stroke-width="1" stroke-linecap="round" stroke-linejoin="round"><rect x="-4.4" y="-3.6" width="8.8" height="7.2" stroke-width="1.1"/><path d="M-4.4 -3.6L4.4 3.6M4.4 -3.6L-4.4 3.6" stroke-width=".9"/></g>
<g transform="translate(11,101.5) scale(.9)" fill="none" stroke="#dcdcdc" stroke-width="1" stroke-linecap="round" stroke-linejoin="round"><rect x="-4.8" y="-2" width="9.6" height="4" fill="#dcdcdc" stroke="none"/><path d="M-3 -2V-0.3M-1 -2V-0.3M1 -2V-0.3M3 -2V-0.3" stroke="#505050" stroke-width=".7"/></g>
<g transform="translate(30.3,101.5) scale(.9)" fill="none" stroke="#dcdcdc" stroke-width="1" stroke-linecap="round" stroke-linejoin="round"><g transform="rotate(-45)"><rect x="-5" y="-2.4" width="10" height="4.8" rx="2.2" fill="#dcdcdc" stroke="none"/><rect x="-1.6" y="-2.4" width="3.2" height="4.8" fill="#505050" stroke="none"/><circle cx="-0.7" cy="-0.8" r=".45" fill="#dcdcdc" stroke="none"/><circle cx="0.7" cy="-0.8" r=".45" fill="#dcdcdc" stroke="none"/><circle cx="-0.7" cy="0.8" r=".45" fill="#dcdcdc" stroke="none"/><circle cx="0.7" cy="0.8" r=".45" fill="#dcdcdc" stroke="none"/></g></g>
<g transform="translate(11,116) scale(.9)" fill="none" stroke="#dcdcdc" stroke-width="1" stroke-linecap="round" stroke-linejoin="round"><path d="M4.6 -4.6L-0.6 1.2L0.6 2.2L4.9 -4.3Z" fill="#dcdcdc" stroke-width=".5"/><path d="M-1.3 1.8C-2.8 1.6 -3.4 3.2 -4.8 4.4C-2.6 4.8 -0.6 4.2 -0.2 2.8Z" fill="#dcdcdc" stroke-width=".5"/></g>
<g transform="translate(30.3,116) scale(.9)" fill="none" stroke="#dcdcdc" stroke-width="1" stroke-linecap="round" stroke-linejoin="round"><path d="M-1.2 -4.6H1.2L1.6 -1.6L4 -0.2V1.4H-4V-0.2L-1.6 -1.6Z" fill="#dcdcdc" stroke-width=".5"/><path d="M-4.4 3.8H4.4" stroke-width="1.3"/></g>
<g transform="translate(11,130.8) scale(.9)" fill="none" stroke="#dcdcdc" stroke-width="1" stroke-linecap="round" stroke-linejoin="round"><path d="M4.6 -4.6L-0.6 1.2L0.6 2.2L4.9 -4.3Z" fill="#dcdcdc" stroke-width=".5"/><path d="M-1.3 1.8C-2.8 1.6 -3.4 3.2 -4.8 4.4C-2.6 4.8 -0.6 4.2 -0.2 2.8Z" fill="#dcdcdc" stroke-width=".5"/><path d="M-4.6 -3.8L-1.2 -0.6M-4.8 -0.6L-2.6 -3.8" stroke-width=".9"/></g>
<g transform="translate(30.3,130.8) scale(.9)" fill="none" stroke="#dcdcdc" stroke-width="1" stroke-linecap="round" stroke-linejoin="round"><path d="M-4.6 1.2L0.8 -4.2L4.6 -1.4L0 3.4H-2.8Z" stroke-width="1"/><path d="M-4.6 1.2L-1 -2.4L2.6 0.6L0 3.4H-2.8Z" fill="#dcdcdc" stroke="none"/><path d="M-1 3.9H4.8" stroke-width=".9"/></g>
<g transform="translate(11,145.5) scale(.9)" fill="none" stroke="#dcdcdc" stroke-width="1" stroke-linecap="round" stroke-linejoin="round"><path d="M-3.8 -1L0.2 -4.4L4 0.2L-0.4 3.8Z" fill="#dcdcdc" stroke-width=".6"/><path d="M-2.6 -3.6C-3.4 -5 -1.2 -5.6 -0.6 -3.8" stroke-width=".8"/><path d="M4.4 1.2C5.2 2.6 5.2 3.6 4.4 3.8C3.6 3.6 3.6 2.6 4.4 1.2Z" fill="#dcdcdc" stroke-width=".4"/></g>
<g transform="translate(30.3,145.5) scale(.9)" fill="none" stroke="#dcdcdc" stroke-width="1" stroke-linecap="round" stroke-linejoin="round"><path d="M-2.8 -1.2C-3 -3.6 -0.6 -5 1.4 -4.4C3.8 -3.8 4.8 -1.8 4 0C3.2 1.4 1.6 1.8 0.6 1L-1.6 4.6L-3.4 3.8L-1.6 0.6C-2.4 0.2 -2.8 -0.4 -2.8 -1.2Z" fill="#dcdcdc" stroke-width=".5"/></g>
<g transform="translate(11,160.3) scale(.9)" fill="none" stroke="#dcdcdc" stroke-width="1" stroke-linecap="round" stroke-linejoin="round"><circle cx="1.2" cy="-1.4" r="2.9" fill="#dcdcdc" stroke="none"/><path d="M-0.8 0.8L-4.4 4.4" stroke-width="1.5"/></g>
<g transform="translate(30.3,160.3) scale(.9)" fill="none" stroke="#dcdcdc" stroke-width="1" stroke-linecap="round" stroke-linejoin="round"><path d="M0.6 -4.6L4.4 -0.8L2.6 0.2L-3.6 4.4L-4.4 3.6L-0.4 -2.8Z" stroke-width=".9"/><circle cx="0.4" cy="0" r=".8" fill="#dcdcdc" stroke="none"/><path d="M-4 4L0 0.3" stroke-width=".6"/></g>
<text x="10.7" y="178.5" font-family="Liberation Serif, serif" font-size="10.5" font-weight="bold" fill="#dcdcdc" text-anchor="middle">T</text>
<g transform="translate(30.3,175) scale(.9)" fill="none" stroke="#dcdcdc" stroke-width="1" stroke-linecap="round" stroke-linejoin="round"><path d="M-2.2 -4.6V3.2L-0.3 1.4L1.1 4.6L2.4 4L1 0.9L3.6 0.8Z" fill="#1e1e1e" stroke="#dcdcdc" stroke-width=".8"/></g>
<g transform="translate(11,189.7) scale(.9)" fill="none" stroke="#dcdcdc" stroke-width="1" stroke-linecap="round" stroke-linejoin="round"><rect x="-4.6" y="-3.4" width="9.2" height="6.8" fill="#7d7d7d" stroke-width="1"/></g>
<g transform="translate(30.3,189.7) scale(.9)" fill="none" stroke="#dcdcdc" stroke-width="1" stroke-linecap="round" stroke-linejoin="round"><path d="M-2.2 4.6C-3.4 2.8 -4.8 1 -4.6 0.2C-4 -0.6 -3 0.2 -2.4 1V-3.2C-2.4 -4.2 -1.2 -4.2 -1.2 -3.2V-4.2C-1.2 -5.2 0.1 -5.2 0.1 -4.2V-3.8C0.1 -4.8 1.4 -4.8 1.4 -3.8V-3C1.4 -3.9 2.6 -3.9 2.6 -3V1.6C2.6 3 2.2 3.8 1.8 4.6Z" fill="#dcdcdc" stroke-width=".4"/></g>
<g transform="translate(11,204.3) scale(.9)" fill="none" stroke="#dcdcdc" stroke-width="1" stroke-linecap="round" stroke-linejoin="round"><circle cx="-0.9" cy="-1.1" r="3.1" stroke-width="1.1"/><path d="M1.4 1.2L4.6 4.4" stroke-width="1.5"/></g>
<g transform="translate(30.3,204.3) scale(.9)" fill="none" stroke="#dcdcdc" stroke-width="1" stroke-linecap="round" stroke-linejoin="round"><circle cx="-3.2" cy="0" r="1" fill="#dcdcdc" stroke="none"/><circle cx="0" cy="0" r="1" fill="#dcdcdc" stroke="none"/><circle cx="3.2" cy="0" r="1" fill="#dcdcdc" stroke="none"/></g>
<path d="M17.6 63.2L15.8 63.2L17.6 61.4Z" fill="#bdbdbd"/>
<path d="M36.9 63.2L35.1 63.2L36.9 61.4Z" fill="#bdbdbd"/>
<path d="M17.6 78L15.8 78L17.6 76.2Z" fill="#bdbdbd"/>
<path d="M36.9 78L35.1 78L36.9 76.2Z" fill="#bdbdbd"/>
<path d="M17.6 92.7L15.8 92.7L17.6 90.9Z" fill="#bdbdbd"/>
<path d="M17.6 107.5L15.8 107.5L17.6 105.7Z" fill="#bdbdbd"/>
<path d="M36.9 107.5L35.1 107.5L36.9 105.7Z" fill="#bdbdbd"/>
<path d="M17.6 122L15.8 122L17.6 120.2Z" fill="#bdbdbd"/>
<path d="M36.9 122L35.1 122L36.9 120.2Z" fill="#bdbdbd"/>
<path d="M17.6 136.8L15.8 136.8L17.6 135Z" fill="#bdbdbd"/>
<path d="M36.9 136.8L35.1 136.8L36.9 135Z" fill="#bdbdbd"/>
<path d="M17.6 151.5L15.8 151.5L17.6 149.7Z" fill="#bdbdbd"/>
<path d="M36.9 151.5L35.1 151.5L36.9 149.7Z" fill="#bdbdbd"/>
<path d="M17.6 166.3L15.8 166.3L17.6 164.5Z" fill="#bdbdbd"/>
<path d="M36.9 166.3L35.1 166.3L36.9 164.5Z" fill="#bdbdbd"/>
<path d="M17.6 181L15.8 181L17.6 179.2Z" fill="#bdbdbd"/>
<path d="M36.9 181L35.1 181L36.9 179.2Z" fill="#bdbdbd"/>
<path d="M17.6 195.7L15.8 195.7L17.6 193.9Z" fill="#bdbdbd"/>
<path d="M36.9 195.7L35.1 195.7L36.9 193.9Z" fill="#bdbdbd"/>
<path d="M36.9 210.3L35.1 210.3L36.9 208.5Z" fill="#bdbdbd"/>
<rect x="18.4" y="224.6" width="14" height="13.2" fill="#ffffff" stroke="#505050" stroke-width=".6"/>
<rect x="10" y="216" width="14" height="13.2" fill="#262626" stroke="#c4c4c4" stroke-width=".8"/>
<path d="M27 220.5V223.5M27 220.5H30M29 219L30.6 220.5L29 222M25.6 222L27 223.8L28.4 222" fill="none" stroke="#dcdcdc" stroke-width=".7" transform="translate(1.4,-4.2)"/>
<rect x="12" y="235.4" width="3.6" height="3.6" fill="#fff" stroke="#ddd" stroke-width=".4"/><rect x="10.2" y="233.6" width="3.6" height="3.6" fill="#1a1a1a" stroke="#ddd" stroke-width=".5"/>
<g transform="translate(10,250) scale(.9)" fill="none" stroke="#dcdcdc" stroke-width="1" stroke-linecap="round" stroke-linejoin="round"><rect x="-4.2" y="-3.2" width="8.4" height="6.4" stroke-width=".9"/><ellipse cx="0" cy="0" rx="2.4" ry="1.9" stroke-width=".7" stroke-dasharray="1 .6"/></g>
<g transform="translate(30,250) scale(.9)" fill="none" stroke="#dcdcdc" stroke-width="1" stroke-linecap="round" stroke-linejoin="round"><rect x="-2.4" y="-3.8" width="7.6" height="5.6" stroke-width=".9"/><rect x="-5" y="-1.6" width="7.6" height="5.6" fill="#505050" stroke-width=".9"/></g>
<path d="M37.2 256L35.4 256L37.2 254.2Z" fill="#bdbdbd"/>
</svg>
<div class="a" style="left:886px;top:47px;width:194px;height:529px;background:#464646;"></div>
<div class="a" style="left:886px;top:34.5px;width:194px;height:12.5px;background:#404040;"></div>
<div class="a" style="left:886px;top:47px;width:21.5px;height:6px;background:#404040;"></div>
<div class="a" style="left:886px;top:53px;width:21.5px;height:131.5px;background:#505050;"></div>
<div class="a" style="left:886px;top:184.5px;width:21.5px;height:391.5px;background:#282828;"></div>
<div class="a" style="left:907.5px;top:47px;width:1px;height:529px;background:#3a3a3a;"></div>
<div class="a" style="left:886px;top:77px;width:21.5px;height:0.7px;background:#444;"></div>
<div class="a" style="left:886px;top:100.5px;width:21.5px;height:0.7px;background:#444;"></div>
<div class="a" style="left:886px;top:123.5px;width:21.5px;height:0.7px;background:#444;"></div>
<div class="a" style="left:886px;top:147px;width:21.5px;height:0.7px;background:#444;"></div>
<div class="a" style="left:908.5px;top:47px;width:160px;height:6px;background:#404040;"></div>
<div class="a" style="left:908.5px;top:53px;width:160px;height:523px;background:#505050;"></div>
<div class="a" style="left:1068.5px;top:47px;width:11.5px;height:529px;background:#484848;"></div>
<div class="a" style="left:1070px;top:159px;width:8.5px;height:132.5px;background:#636363;"></div>
<svg width="1080" height="592">
<path d="M900 48.5L901.6 50L900 51.5M902.3 48.5L903.9 50L902.3 51.5" fill="none" stroke="#c8c8c8" stroke-width=".7"/>
<path d="M1053.6 48.5L1052 50L1053.6 51.5M1055.9 48.5L1054.3 50L1055.9 51.5" fill="none" stroke="#c8c8c8" stroke-width=".7"/>
<path d="M1062.3 48.6L1065.1 51.4M1065.1 48.6L1062.3 51.4" stroke="#d8d8d8" stroke-width=".9"/>
<path d="M1072.5 57.5L1074.2 55.8L1075.9 57.5" fill="none" stroke="#8a8a8a" stroke-width=".8"/>
<text x="896.7" y="69" font-family="Liberation Sans, sans-serif" font-size="10.5" font-weight="bold" fill="#dcdcdc" text-anchor="middle">¶</text>
<text x="896.3" y="93" font-family="Liberation Serif, serif" font-size="10.5" font-style="italic" font-weight="bold" fill="#dcdcdc" text-anchor="middle">A</text>
<text x="895.6" y="116.3" font-family="Liberation Sans, sans-serif" font-size="9.5" fill="#dcdcdc" text-anchor="middle">A</text><path d="M900.2 108.5V117.5" stroke="#dcdcdc" stroke-width=".8"/>
<g fill="none" stroke="#dcdcdc" stroke-width=".9"><rect x="892.3" y="131.5" width="3.6" height="8.6" fill="#dcdcdc" stroke="none"/><path d="M893.2 133H895M893.2 135H895M893.2 137H895" stroke="#505050" stroke-width=".6"/><path d="M898 132.5C901 132.5 902 135.5 899.6 138.5M898.2 139.6L899.6 138.5L900 140.2" stroke-width="1"/></g>
<g fill="none" stroke="#dcdcdc" stroke-width=".8"><path d="M901.6 155L896 160.6L895 162.6L897 161.8L902 155.6Z" fill="#dcdcdc" stroke-width=".4"/><path d="M894.6 162.2C893.2 162 893 163.6 891.6 164.6C893.6 165 895.2 164.4 895.4 163Z" fill="#dcdcdc" stroke-width=".4"/><path d="M891.3 155.6H894.6M891.3 157.2H893.6" stroke-width=".6"/></g>
<g fill="none" stroke="#dcdcdc" stroke-width="1"><path d="M891.5 171.5H901.5M891.5 176.5H901.5"/><rect x="892.4" y="170.2" width="2.4" height="2.6" fill="#dcdcdc" stroke="none"/><circle cx="899.6" cy="176.5" r="1.6" fill="#dcdcdc" stroke="none"/></g>
</svg>
<div class="a" style="left:908.5px;top:53px;width:160px;height:17px;background:#404040;"></div>
<div class="a" style="left:908.5px;top:53px;width:21.8px;height:17px;background:#505050;"></div>
<div class="t " style="left:913.1px;top:58.3px;font-size:6.6px;color:#f0f0f0;font-weight:bold">颜色</div>
<div class="a" style="left:930.3px;top:53px;width:22.6px;height:17px;background:#454545;"></div>
<div class="a" style="left:952.4px;top:53px;width:0.7px;height:17px;background:#3c3c3c;"></div>
<div class="t " style="left:934.9px;top:58.3px;font-size:6.6px;color:#a9a9a9;font-weight:normal">色板</div>
<div class="a" style="left:952.9px;top:53px;width:22.6px;height:17px;background:#454545;"></div>
<div class="a" style="left:975px;top:53px;width:0.7px;height:17px;background:#3c3c3c;"></div>
<div class="t " style="left:957.5px;top:58.3px;font-size:6.6px;color:#a9a9a9;font-weight:normal">渐变</div>
<div class="a" style="left:975.5px;top:53px;width:22.6px;height:17px;background:#454545;"></div>
<div class="a" style="left:997.6px;top:53px;width:0.7px;height:17px;background:#3c3c3c;"></div>
<div class="t " style="left:980.1px;top:58.3px;font-size:6.6px;color:#a9a9a9;font-weight:normal">图案</div>
<svg width="1080" height="592"><path d="M1060.5 60.6h5M1060.5 62h5M1060.5 63.4h5" stroke="#9c9c9c" stroke-width=".7"/></svg>
<div class="a" style="left:919.6px;top:82px;width:11px;height:10.6px;background:#ffffff;border:.6px solid #505050;outline:.4px solid #888"></div>
<div class="a" style="left:914px;top:76px;width:10.8px;height:10.6px;background:#262626;border:.8px solid #cfcfcf"></div>
<div class="a" style="left:933.7px;top:73.5px;width:105.5px;height:60.3px;background:linear-gradient(to bottom,rgba(0,0,0,0),#000),linear-gradient(to right,#fff,#ff6a00)"></div>
<div class="a" style="left:1048.3px;top:73.5px;width:10.9px;height:60.3px;background:linear-gradient(to bottom,#ff0000 0%,#ff00ff 17%,#0000ff 33%,#00ffff 50%,#00ff00 67%,#ffff00 83%,#ff0000 100%)"></div>
<svg width="1080" height="592"><circle cx="934.4" cy="74.6" r="1.8" fill="none" stroke="#fff" stroke-width=".8"/><path d="M1043.2 127.4L1046.4 129.4L1043.2 131.4Z" fill="#e8e8e8"/></svg>
<div class="a" style="left:908.5px;top:145.5px;width:160px;height:0.8px;background:#3a3a3a;"></div>
<div class="a" style="left:908.5px;top:146.3px;width:160px;height:17px;background:#404040;"></div>
<div class="a" style="left:908.5px;top:146.3px;width:21.8px;height:17px;background:#505050;"></div>
<div class="t " style="left:913.1px;top:151.6px;font-size:6.6px;color:#f0f0f0;font-weight:bold">属性</div>
<div class="a" style="left:930.3px;top:146.3px;width:22.6px;height:17px;background:#454545;"></div>
<div class="a" style="left:952.4px;top:146.3px;width:0.7px;height:17px;background:#3c3c3c;"></div>
<div class="t " style="left:934.9px;top:151.6px;font-size:6.6px;color:#a9a9a9;font-weight:normal">调整</div>
<div class="a" style="left:952.9px;top:146.3px;width:19px;height:17px;background:#454545;"></div>
<div class="a" style="left:971.4px;top:146.3px;width:0.7px;height:17px;background:#3c3c3c;"></div>
<div class="t " style="left:957.5px;top:151.6px;font-size:6.6px;color:#a9a9a9;font-weight:normal">库</div>
<svg width="1080" height="592"><path d="M1060.5 153.9h5M1060.5 155.3h5M1060.5 156.7h5" stroke="#9c9c9c" stroke-width=".7"/></svg>
<div class="a" style="left:914.8px;top:166.8px;width:11.6px;height:11.6px;background:#3a3a3a;border:.5px solid #2c2c2c"></div>
<svg width="1080" height="592"><rect x="917.3" y="169.5" width="6.6" height="6" fill="none" stroke="#e4e4e4" stroke-width=".8"/><path d="M918 174.8L919.8 172.6L921 174L922 173L923.4 174.8Z" fill="#e4e4e4"/><circle cx="922.3" cy="171.2" r=".6" fill="#e4e4e4"/></svg>
<div class="t " style="left:930.5px;top:169.6px;font-size:6.75px;color:#d8d8d8;">像素图层</div>
<div class="a" style="left:908.5px;top:182.8px;width:151.5px;height:0.7px;background:#434343;"></div>
<div class="a" style="left:908.5px;top:200.6px;width:151.5px;height:0.7px;background:#434343;"></div>
<div class="a" style="left:908.5px;top:218.4px;width:151.5px;height:0.7px;background:#434343;"></div>
<div class="a" style="left:908.5px;top:183.5px;width:151.5px;height:17px;background:#4d4d4d;"></div>
<div class="a" style="left:908.5px;top:201.3px;width:151.5px;height:17px;background:#4d4d4d;"></div>
<svg width="1080" height="592"><g fill="none" stroke="#c4c4c4" stroke-width=".8"><path d="M913.6 188.6L915.6 191.2L913.6 193.8"/><path d="M913.6 206.4L915.6 209L913.6 211.6"/><path d="M912.6 225.4L915.2 227.4L917.8 225.4"/></g></svg>
<div class="t " style="left:921px;top:187.8px;font-size:6.75px;color:#f2f2f2;font-weight:bold">变换</div>
<div class="t " style="left:921px;top:205.6px;font-size:6.75px;color:#f2f2f2;font-weight:bold">对齐并分布</div>
<div class="t " style="left:921px;top:223.6px;font-size:6.75px;color:#f2f2f2;font-weight:bold">快速操作</div>
<div class="a" style="left:913.7px;top:236.3px;width:105.3px;height:12.2px;background:#3d3d3d;border-radius:1px"></div>
<div class="a" style="left:913.7px;top:254px;width:105.3px;height:12.2px;background:#3d3d3d;border-radius:1px"></div>
<div class="t " style="left:952.8px;top:239px;font-size:6.75px;color:#e6e6e6;">删除背景</div>
<div class="t " style="left:952.8px;top:256.7px;font-size:6.75px;color:#e6e6e6;">选择主体</div>
<div class="t " style="left:952.8px;top:274px;font-size:6.75px;color:#e0e0e0;text-decoration:underline;text-underline-offset:1px">查看更多</div>
<div class="a" style="left:1060px;top:183.5px;width:8.5px;height:100px;background:#484848;"></div>
<div class="a" style="left:1061px;top:191px;width:6.5px;height:73px;background:#626262;"></div>
<svg width="1080" height="592"><g fill="none" stroke="#8e8e8e" stroke-width=".8"><path d="M1062.6 188L1064.3 186.3L1066 188"/><path d="M1062.6 276L1064.3 277.7L1066 276"/></g></svg>
<div class="a" style="left:908.5px;top:296px;width:160px;height:0.8px;background:#3a3a3a;"></div>
<div class="a" style="left:908.5px;top:296.8px;width:160px;height:17px;background:#404040;"></div>
<div class="a" style="left:908.5px;top:296.8px;width:21.8px;height:17px;background:#505050;"></div>
<div class="t " style="left:913.1px;top:302.1px;font-size:6.6px;color:#f0f0f0;font-weight:bold">图层</div>
<div class="a" style="left:930.3px;top:296.8px;width:22.6px;height:17px;background:#454545;"></div>
<div class="a" style="left:952.4px;top:296.8px;width:0.7px;height:17px;background:#3c3c3c;"></div>
<div class="t " style="left:934.9px;top:302.1px;font-size:6.6px;color:#a9a9a9;font-weight:normal">通道</div>
<div class="a" style="left:952.9px;top:296.8px;width:22.6px;height:17px;background:#454545;"></div>
<div class="a" style="left:975px;top:296.8px;width:0.7px;height:17px;background:#3c3c3c;"></div>
<div class="t " style="left:957.5px;top:302.1px;font-size:6.6px;color:#a9a9a9;font-weight:normal">路径</div>
<svg width="1080" height="592"><path d="M1060.5 304.4h5M1060.5 305.8h5M1060.5 307.2h5" stroke="#9c9c9c" stroke-width=".7"/></svg>
<div class="a" style="left:911.7px;top:319.8px;width:46.5px;height:11px;background:#3b3b3b;border:.5px solid #474747"></div>
<div class="t " style="left:923.5px;top:322px;font-size:6.75px;color:#d8d8d8;">类型</div>
<div class="a" style="left:911.7px;top:335.6px;width:64px;height:11px;background:#3b3b3b;border:.5px solid #474747"></div>
<div class="t " style="left:915.5px;top:337.8px;font-size:6.75px;color:#d8d8d8;">正常</div>
<div class="t " style="left:980px;top:337.8px;font-size:6.75px;color:#d8d8d8;">不透明度:</div>
<div class="a" style="left:1012.5px;top:335.6px;width:21px;height:11px;background:#3b3b3b;border:.5px solid #474747"></div>
<div class="t " style="left:1014.3px;top:338.2px;font-size:6.4px;color:#d8d8d8;">100%</div>
<div class="a" style="left:1034px;top:335.6px;width:8px;height:11px;background:#3b3b3b;border:.5px solid #474747"></div>
<div class="a" style="left:908.5px;top:332.6px;width:160px;height:0.6px;background:#474747;"></div>
<div class="a" style="left:908.5px;top:348.6px;width:160px;height:0.6px;background:#474747;"></div>
<div class="t " style="left:912px;top:353.6px;font-size:6.75px;color:#d8d8d8;">锁定:</div>
<div class="t " style="left:993.5px;top:353.6px;font-size:6.75px;color:#d8d8d8;">填充:</div>
<div class="a" style="left:1012.5px;top:351.4px;width:21px;height:11px;background:#3b3b3b;border:.5px solid #474747"></div>
<div class="t " style="left:1014.3px;top:354px;font-size:6.4px;color:#d8d8d8;">100%</div>
<div class="a" style="left:1034px;top:351.4px;width:8px;height:11px;background:#3b3b3b;border:.5px solid #474747"></div>
<svg width="1080" height="592">
<g fill="none" stroke="#d8d8d8" stroke-width=".8">
<circle cx="917" cy="324.6" r="1.9"/><path d="M918.4 326L920 327.8" stroke-width="1"/>
<path d="M952.6 324.2L954.3 325.9L956 324.2" stroke="#bdbdbd"/>
<path d="M969.6 340L971.3 341.7L973 340" stroke="#bdbdbd"/>
<path d="M1036.4 340.3L1038 341.9L1039.6 340.3" stroke="#bdbdbd"/>
<path d="M1036.4 356.1L1038 357.7L1039.6 356.1" stroke="#bdbdbd"/>
<rect x="968.5" y="321.6" width="6.4" height="5.8"/><path d="M969.3 326.6L971 324.6L972.2 325.8L973 325L974.2 326.6Z" fill="#d8d8d8" stroke="none"/>
<circle cx="985" cy="324.6" r="3"/><path d="M985 321.6A3 3 0 0 1 985 327.6Z" fill="#d8d8d8" stroke="none"/>
</g>
<text x="998.6" y="328" font-family="Liberation Serif, serif" font-size="9" font-weight="bold" fill="#d8d8d8" text-anchor="middle">T</text>
<g fill="none" stroke="#d8d8d8" stroke-width=".8"><rect x="1009.6" y="322.2" width="5.2" height="5.2"/><rect x="1008.6" y="321.2" width="1.6" height="1.6" fill="#d8d8d8"/><rect x="1014.2" y="321.2" width="1.6" height="1.6" fill="#d8d8d8"/><rect x="1008.6" y="326.8" width="1.6" height="1.6" fill="#d8d8d8"/><rect x="1014.2" y="326.8" width="1.6" height="1.6" fill="#d8d8d8"/>
<path d="M1023.6 321.4H1026.6L1028.6 323.4V328H1023.6Z" fill="#d8d8d8"/><rect x="1024.6" y="325" width="2.2" height="2" fill="#505050" stroke="none"/></g>
<circle cx="1040.6" cy="321.8" r="2.2" fill="#e6e6e6"/><rect x="1039.4" y="323.6" width="2.4" height="4.6" fill="#7a7a7a"/>
<g fill="none" stroke="#d8d8d8" stroke-width=".7"><rect x="933.4" y="353.4" width="6.4" height="6.4"/><path d="M933.4 355.5H939.8M933.4 357.7H939.8M935.5 353.4V359.8M937.7 353.4V359.8" stroke-width=".5"/><rect x="933.4" y="353.4" width="2.1" height="2.1" fill="#d8d8d8" stroke="none"/><rect x="937.7" y="353.4" width="2.1" height="2.1" fill="#d8d8d8" stroke="none"/><rect x="935.5" y="355.5" width="2.2" height="2.2" fill="#d8d8d8" stroke="none"/><rect x="933.4" y="357.7" width="2.1" height="2.1" fill="#d8d8d8" stroke="none"/><rect x="937.7" y="357.7" width="2.1" height="2.1" fill="#d8d8d8" stroke="none"/></g>
<g transform="translate(948.6,356.8) scale(.8)" fill="#d8d8d8" stroke="#d8d8d8"><path d="M4.6 -4.6L-0.6 1.2L0.6 2.2L4.9 -4.3Z" stroke-width=".5"/><path d="M-1.3 1.8C-2.8 1.6 -3.4 3.2 -4.8 4.4C-2.6 4.8 -0.6 4.2 -0.2 2.8Z" stroke-width=".5"/></g>
<g transform="translate(961.2,356.6) scale(.72)" fill="none" stroke="#d8d8d8" stroke-width="1.2"><path d="M0 -4.6V4.6M-4.6 0H4.6"/><path d="M-1.7 -3L0 -4.8L1.7 -3M-1.7 3L0 4.8L1.7 3M-3 -1.7L-4.8 0L-3 1.7M3 -1.7L4.8 0L3 1.7" fill="#d8d8d8" stroke-width=".8"/></g>
<g fill="none" stroke="#d8d8d8" stroke-width=".8"><path d="M971.6 352.6V359.6H978.8M970 354.4H977V361"/></g>
<g><rect x="983.4" y="355.6" width="5.6" height="4.6" fill="#d8d8d8"/><path d="M984.6 355.6V354.2A1.6 1.6 0 0 1 987.8 354.2V355.6" fill="none" stroke="#d8d8d8" stroke-width=".9"/></g>
</svg>
<div class="a" style="left:908.5px;top:366.3px;width:151.5px;height:192.7px;background:#4b4b4b;"></div>
<div class="a" style="left:908.5px;top:385.6px;width:151.5px;height:19.6px;background:#646464;"></div>
<div class="a" style="left:908.5px;top:385.2px;width:151.5px;height:0.6px;background:#434343;"></div>
<div class="a" style="left:908.5px;top:405px;width:151.5px;height:0.6px;background:#434343;"></div>
<div class="a" style="left:908.5px;top:425.2px;width:151.5px;height:0.6px;background:#464646;"></div>
<div class="a" style="left:1060px;top:366.3px;width:8.5px;height:59.5px;background:#474747;"></div>
<div class="a" style="left:1060px;top:425.8px;width:8.5px;height:133.2px;background:#4b4b4b;"></div>
<div class="a" style="left:911.6px;top:372.6px;width:7px;height:7px;background:#474747;border:.5px solid #565656"></div>
<div class="a" style="left:928px;top:368.7px;width:17px;height:14px;background:#fdfdfd;border:.5px solid #333"></div>
<div class="t " style="left:950.6px;top:373.6px;font-size:6.75px;color:#e2e2e2;">图层 1</div>
<div class="a" style="left:926.6px;top:387.4px;width:19.6px;height:16.4px;border:.7px solid #e8e8e8;background:#646464"></div>
<div class="a" style="left:928.4px;top:389px;width:16px;height:13.2px;background-color:#fff;background-image:linear-gradient(45deg,#ccc 25%,transparent 25%,transparent 75%,#ccc 75%),linear-gradient(45deg,#ccc 25%,transparent 25%,transparent 75%,#ccc 75%);background-size:4px 4px;background-position:0 0,2px 2px"></div>
<div class="a" style="left:933px;top:387px;width:7px;height:1.4px;background:#646464;"></div>
<div class="a" style="left:933px;top:402.6px;width:7px;height:1.4px;background:#646464;"></div>
<div class="t " style="left:950.6px;top:393.4px;font-size:6.75px;color:#f4f4f4;">图层 2</div>
<div class="a" style="left:928px;top:408.6px;width:17px;height:14px;background:#f5e49a;border:.5px solid #333"></div>
<div class="a" style="left:929px;top:413px;width:15px;height:0.8px;background:#e9c84f;"></div>
<div class="a" style="left:929px;top:417.4px;width:15px;height:0.8px;background:#e9c84f;"></div>
<div class="a" style="left:933px;top:409px;width:0.8px;height:13px;background:#e9c84f;"></div>
<div class="t " style="left:950.6px;top:413px;font-size:6.75px;color:#e2e2e2;">背景</div>
<svg width="1080" height="592"><g fill="none" stroke="#e0e0e0" stroke-width=".8">
<path d="M913.2 395.4C915 392 919.2 392 921 395.4C919.2 398.8 915 398.8 913.2 395.4Z" fill="#ececec" stroke="none"/><circle cx="917.1" cy="395.4" r="1.5" fill="#3a3a3a" stroke="none"/>
<path d="M913.2 415.3C915 411.9 919.2 411.9 921 415.3C919.2 418.7 915 418.7 913.2 415.3Z" fill="#ececec" stroke="none"/><circle cx="917.1" cy="415.3" r="1.5" fill="#3a3a3a" stroke="none"/>
<rect x="1044.6" y="415" width="4.6" height="3.8" stroke-width=".8"/><path d="M1045.6 415V413.8A1.3 1.3 0 0 1 1048.2 413.8V415" stroke-width=".8"/>
</g></svg>
<div class="a" style="left:908.5px;top:559px;width:160px;height:14.5px;background:#505050;border-top:.6px solid #444"></div>
<div class="a" style="left:908.5px;top:573.5px;width:160px;height:2.5px;background:#3a3a3a;"></div>
<svg width="1080" height="592">
<g fill="none" stroke="#7c7c7c" stroke-width=".8"><rect x="955" y="564" width="3.6" height="2.8" rx="1.4"/><rect x="958" y="564" width="3.6" height="2.8" rx="1.4"/></g>
<text x="970.6" y="568" font-family="Liberation Serif, serif" font-style="italic" font-size="8" fill="#dcdcdc">fx</text><circle cx="977.6" cy="569" r=".6" fill="#dcdcdc"/>
<rect x="985" y="562.6" width="7.4" height="5.8" fill="#dcdcdc"/><circle cx="988.7" cy="565.5" r="1.7" fill="#505050"/>
<circle cx="1003.4" cy="565.4" r="3" fill="none" stroke="#dcdcdc" stroke-width=".8"/><path d="M1001.3 567.5A3 3 0 0 0 1005.5 563.3Z" fill="#dcdcdc"/><circle cx="1007.6" cy="569" r=".6" fill="#dcdcdc"/>
<path d="M1015.6 562.6H1018.4L1019.2 563.6H1022.8V568.4H1015.6Z" fill="#dcdcdc"/>
<rect x="1031.6" y="562.4" width="6" height="6" fill="none" stroke="#dcdcdc" stroke-width=".8"/><path d="M1034.6 563.8V567M1033 565.4H1036.2" stroke="#dcdcdc" stroke-width=".8"/>
<path d="M1046.6 563.6H1051.6M1048 563.6V562.6H1050.2V563.6" fill="none" stroke="#dcdcdc" stroke-width=".8"/><rect x="1047" y="564.4" width="4.2" height="4.4" fill="#dcdcdc"/>
<path d="M1072.5 569L1074.2 570.7L1075.9 569" fill="none" stroke="#8a8a8a" stroke-width=".8"/>
</svg>
<div class="a" style="left:41.5px;top:576px;width:1038.5px;height:9.3px;background:#494949;"></div>
<div class="a" style="left:68.5px;top:576.6px;width:94.5px;height:8px;background:#3b3b3b;"></div>
<div class="t " style="left:43.7px;top:577.4px;font-size:6.4px;color:#e4e4e4;letter-spacing:-0.031px;">71.45%</div>
<div class="t " style="left:72px;top:577.4px;font-size:6.4px;color:#dcdcdc;letter-spacing:-0.096px;">3338 像素 x 2583 像素 (600 ppi)</div>
<div class="a" style="left:636px;top:578px;width:274px;height:6.6px;background:#5e5e5e;"></div>
<svg width="1080" height="592"><g fill="none" stroke="#bdbdbd" stroke-width=".8"><path d="M166.8 578.6L168.6 580.6L166.8 582.6"/><path d="M178.6 578.6L176.8 580.6L178.6 582.6" stroke="#8a8a8a"/><path d="M1064.2 578.6L1066 580.6L1064.2 582.6" stroke="#8a8a8a"/></g></svg>
<div class="a" style="left:0px;top:585.2px;width:1080px;height:6.8px;background:#30281f;"></div>
<div class="a" style="left:246.7px;top:585.2px;width:26.5px;height:6.8px;background:#4c463f;"></div>
<svg width="1080" height="592">
<circle cx="41.8" cy="594.6" r="4.6" fill="none" stroke="#f0f0f0" stroke-width="1.4"/>
<rect x="119.5" y="590.8" width="7" height="3" fill="#2aa3e8"/><rect x="143.5" y="591.2" width="6" height="3" fill="#e8a33a"/><circle cx="175" cy="594.4" r="3.6" fill="#3fbf6a"/><circle cx="233" cy="594" r="5" fill="none" stroke="#2fc4d8" stroke-width="2"/><rect x="255" y="589.4" width="10" height="4" fill="#0c2036"/><rect x="286" y="589.6" width="9" height="4" fill="#1f93e0"/>
<text x="1021.4" y="593.9" font-family="Liberation Sans, sans-serif" font-size="7.4" fill="#f0f0f0">19:22</text>
</svg>
<svg width="1080" height="592">
<path d="M471.9 237.4H477M657.4 237.4H662.1M486.6 237.4H497.2M508.0 237.4H518.6M529.3 237.4H539.9M550.7 237.4H561.3M572.0 237.4H582.6M593.4 237.4H604.0M614.7 237.4H625.3M636.1 237.4H646.7M471.9 434H477M657.4 434H662.1M486.6 434H497.2M508.0 434H518.6M529.3 434H539.9M550.7 434H561.3M572.0 434H582.6M593.4 434H604.0M614.7 434H625.3M636.1 434H646.7M473.6 235.7V245.2M473.6 256.0V266.5M473.6 277.1V287.6M473.6 298.3V308.8M473.6 319.4V329.9M473.6 340.6V351.1M473.6 361.8V372.2M473.6 382.9V393.4M473.6 404.0V414.5M473.6 425.6V435.7M660.4 235.7V245.2M660.4 256.0V266.5M660.4 277.1V287.6M660.4 298.3V308.8M660.4 319.4V329.9M660.4 340.6V351.1M660.4 361.8V372.2M660.4 382.9V393.4M660.4 404.0V414.5M660.4 425.6V435.7" fill="none" stroke="#0b0b0b" stroke-width="3.4"/>
<path d="M704.6 224.6C697.5 216.5 686 210.8 675.5 211.2C666 211.6 658.5 215.8 652.5 221" fill="none" stroke="#f02d0c" stroke-width="3.5" stroke-linecap="butt"/>
<path d="M642.1 230.4L647.1 215.6L657.3 225Z" fill="#f02d0c"/>
<ellipse cx="976.9" cy="394.6" rx="71.4" ry="14.3" fill="none" stroke="#f02d0c" stroke-width="2.9"/>
<path d="M857.8 412.8L905 394.8" stroke="#f02d0c" stroke-width="2.8" stroke-linecap="round"/>
</svg>
<div class="t red" style="left:676.6px;top:255.4px;font-size:14.8px;letter-spacing:0.102px;">1.框选出纹饰部分，</div>
<div class="t red" style="left:677px;top:272.6px;font-size:14.8px;letter-spacing:0.353px;">按下Ctrl<span style="font-family:Liberation Sans,sans-serif;font-size:17px;line-height:0;padding:0 1.6px 0 1.8px;position:relative;top:.8px">+</span>J键，复制图层。</div>
<div class="t red" style="left:747px;top:413.6px;font-size:15px;letter-spacing:0.498px;">复制出来的图层</div>
<svg width="1080" height="592">
<g opacity=".9">
<ellipse cx="800.6" cy="543.6" rx="14.2" ry="12" fill="#a6a6a6"/><path d="M792.4 552L790.6 558.2L797.6 554.8Z" fill="#a6a6a6"/>
<ellipse cx="815.2" cy="553.8" rx="13" ry="11.2" fill="#282828"/>
<ellipse cx="815.2" cy="553.8" rx="12" ry="10.2" fill="#a6a6a6"/><path d="M819.5 562L824.6 565.4L823.6 560Z" fill="#a6a6a6"/>
<circle cx="796" cy="539.6" r="1.8" fill="#282828"/><circle cx="806.2" cy="539.6" r="1.8" fill="#282828"/><circle cx="811.4" cy="550.6" r="1.5" fill="#282828"/><circle cx="819.4" cy="550.6" r="1.5" fill="#282828"/>
</g></svg>
<div class="t " style="left:834.2px;top:535.6px;font-size:29px;color:rgba(186,186,186,.8);letter-spacing:1.995px;font-weight:400">服务号</div>
<div class="t " style="left:960.4px;top:535.6px;font-size:29px;color:rgba(186,186,186,.8);letter-spacing:0.495px;font-weight:400">古探长</div>
<div class="t " style="left:917.4px;top:533.6px;font-size:11.3px;color:rgba(150,150,150,.7);letter-spacing:0.694px;">激活 Windows</div>
<div class="t " style="left:917.4px;top:548.6px;font-size:7.7px;color:rgba(140,140,140,.7);letter-spacing:0.595px;">转到"设置"以激活 Windows。</div>
<div class="a" style="left:938.9px;top:549.2px;width:2.8px;height:2.8px;border-radius:50%;background:rgba(215,215,215,.9)"></div>
</body>
</html>
